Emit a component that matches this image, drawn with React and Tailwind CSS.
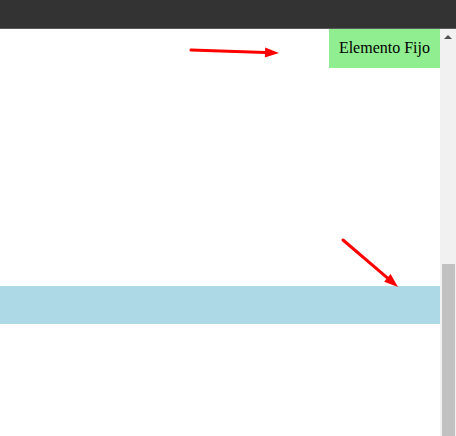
// Página con barra superior, elemento fijo y barra de desplazamiento.
function Flecha({ x1, y1, x2, y2 }) {
  const ang = Math.atan2(y2 - y1, x2 - x1);
  const largo = 14;
  const ancho = 5;
  const bx = x2 - largo * Math.cos(ang);
  const by = y2 - largo * Math.sin(ang);
  const px = -Math.sin(ang) * ancho;
  const py = Math.cos(ang) * ancho;
  return (
    <g>
      <line x1={x1} y1={y1} x2={bx} y2={by} stroke="#ff0000" strokeWidth="3" strokeLinecap="round" />
      <polygon points={`${x2},${y2} ${bx + px},${by + py} ${bx - px},${by - py}`} fill="#ff0000" />
    </g>
  );
}

export default function App() {
  return (
    <div className="relative flex h-[436px] w-[456px] flex-col overflow-hidden bg-white" style={{ fontFamily: '"Liberation Serif", serif' }}>
      <div className="h-[29px] shrink-0 border-b border-[#5a5a5a] bg-[#333333]" />
      <div className="flex min-h-0 flex-1">
        <div className="flex flex-1 flex-col">
          <div className="flex justify-end">
            <div className="bg-[#90ee90] px-[10px] pt-[9px] pb-[10px] text-[16px] leading-[20px] text-black">Elemento Fijo</div>
          </div>
          <div className="mt-[218px] h-[38px] bg-[#add8e6]" />
        </div>
        <div className="flex w-[16px] flex-col items-center bg-[#f1f1f1]">
          <div className="mt-[6px] h-0 w-0 border-x-[4px] border-b-[4px] border-x-transparent border-b-[#505050]" />
          <div className="mt-[225px] w-[13px] flex-1 self-end mr-[1px] bg-[#c1c1c1]" />
        </div>
      </div>
      <svg className="pointer-events-none absolute inset-0" width="456" height="436">
        <Flecha x1={191} y1={50} x2={279} y2={53} />
        <Flecha x1={343} y1={240} x2={398} y2={287} />
      </svg>
    </div>
  );
}
